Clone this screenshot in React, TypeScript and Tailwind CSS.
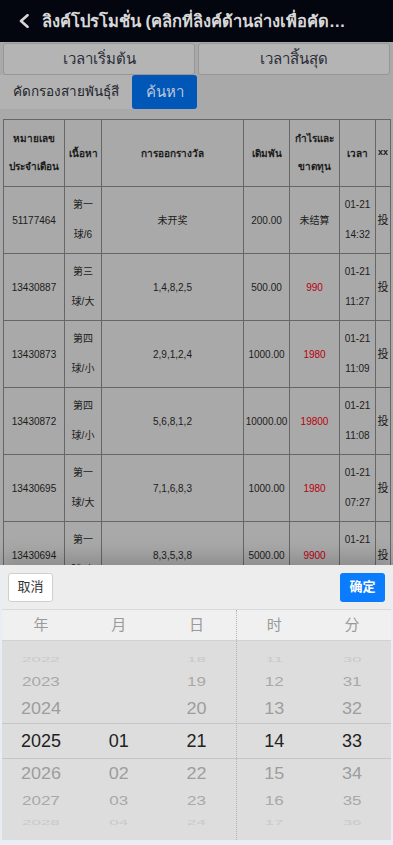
import React from "react";

type Row = {
  id: string;
  c1: string;
  c2: string;
  draw: string;
  bet: string;
  profit: string;
  red: boolean;
  d: string;
  t: string;
};

const rows: Row[] = [
  { id: "51177464", c1: "第一", c2: "球/6", draw: "未开奖", bet: "200.00", profit: "未结算", red: false, d: "01-21", t: "14:32" },
  { id: "13430887", c1: "第三", c2: "球/大", draw: "1,4,8,2,5", bet: "500.00", profit: "990", red: true, d: "01-21", t: "11:27" },
  { id: "13430873", c1: "第四", c2: "球/小", draw: "2,9,1,2,4", bet: "1000.00", profit: "1980", red: true, d: "01-21", t: "11:09" },
  { id: "13430872", c1: "第四", c2: "球/小", draw: "5,6,8,1,2", bet: "10000.00", profit: "19800", red: true, d: "01-21", t: "11:08" },
  { id: "13430695", c1: "第一", c2: "球/大", draw: "7,1,6,8,3", bet: "1000.00", profit: "1980", red: true, d: "01-21", t: "07:27" },
  { id: "13430694", c1: "第一", c2: "球/大", draw: "8,3,5,3,8", bet: "5000.00", profit: "9900", red: true, d: "01-21", t: "07:26" },
  { id: "13430690", c1: "第二", c2: "球/小", draw: "3,2,7,9,1", bet: "500.00", profit: "990", red: true, d: "01-21", t: "07:20" },
];

const slotStyles = [
  { h: "h-[20px]", cls: "text-[17px] text-[#c9c9c9] scale-y-[0.45]" },
  { h: "h-[24px]", cls: "text-[17px] text-[#a8a8a8] scale-y-[0.8]" },
  { h: "h-[30px]", cls: "text-[18px] text-[#9d9d9d] scale-y-[0.92]" },
  { h: "h-[35px]", cls: "text-[18px] text-[#222222]" },
  { h: "h-[30px]", cls: "text-[18px] text-[#9d9d9d] scale-y-[0.92]" },
  { h: "h-[24px]", cls: "text-[17px] text-[#a8a8a8] scale-y-[0.8]" },
  { h: "h-[20px]", cls: "text-[17px] text-[#c9c9c9] scale-y-[0.45]" },
];

const wheels: string[][] = [
  ["2022", "2023", "2024", "2025", "2026", "2027", "2028"],
  ["", "", "", "01", "02", "03", "04"],
  ["18", "19", "20", "21", "22", "23", "24"],
  ["11", "12", "13", "14", "15", "16", "17"],
  ["30", "31", "32", "33", "34", "35", "36"],
];

const labels = ["年", "月", "日", "时", "分"];

const font = {
  fontFamily:
    '"Liberation Sans", Tahoma, "Noto Sans", "Noto Sans CJK SC", sans-serif',
};

export default function App() {
  return (
    <div
      className="relative w-[393px] h-[845px] overflow-hidden bg-[#a9a9a9]"
      style={font}
    >
      {/* Header */}
      <div className="h-[42px] bg-[#03050f] flex items-center pl-[19px] pr-[44px]">
        <svg width="10" height="14" viewBox="0 0 10 14" className="shrink-0">
          <polyline
            points="8.5,1.2 2,7 8.5,12.8"
            fill="none"
            stroke="#d6d6d6"
            strokeWidth="2.6"
            strokeLinecap="round"
            strokeLinejoin="round"
          />
        </svg>
        <div className="ml-[13px] flex-1 min-w-0 truncate text-[16.5px] font-semibold text-[#d8d8d8] leading-[42px]">
          ลิงค์โปรโมชั่น (คลิกที่ลิงค์ด้านล่างเพื่อคัดลอก)
        </div>
      </div>

      {/* Time buttons */}
      <div className="mt-[1px] px-[3px] flex gap-[3px]">
        <div className="flex-1 h-[32px] rounded-[3px] border border-[#979797] bg-[#b4b4b4] flex items-center justify-center text-[15px] text-[#2a2c38]">
          เวลาเริ่มต้น
        </div>
        <div className="flex-1 h-[32px] rounded-[3px] border border-[#979797] bg-[#b4b4b4] flex items-center justify-center text-[15px] text-[#2a2c38]">
          เวลาสิ้นสุด
        </div>
      </div>

      {/* Filter row */}
      <div className="flex h-[34px]">
        <div className="w-[132px] bg-[#b2b2b2] flex items-center pl-[13px] text-[13.5px] whitespace-nowrap text-[#23252e]">
          คัดกรองสายพันธุ์สี
        </div>
        <div className="w-[65px] rounded-[3px] bg-[#0057b7] flex items-center justify-center text-[15px] text-[#bcc6da]">
          ค้นหา
        </div>
      </div>

      {/* Table */}
      <div className="mt-[10px] px-[3px]">
        <table className="w-[387px] table-fixed border-collapse text-[10px] text-[#1c1c1c]">
          <colgroup>
            <col className="w-[61px]" />
            <col className="w-[37px]" />
            <col className="w-[142px]" />
            <col className="w-[46px]" />
            <col className="w-[50px]" />
            <col className="w-[36px]" />
            <col className="w-[15px]" />
          </colgroup>
          <thead>
            <tr className="h-[67px]">
              <th className="border border-[#666] font-bold leading-[28px] text-center p-0">
                หมายเลข
                <br />
                ประจำเดือน
              </th>
              <th className="border border-[#666] font-bold text-center p-0">เนื้อหา</th>
              <th className="border border-[#666] font-bold text-center p-0">การออกรางวัล</th>
              <th className="border border-[#666] font-bold text-center p-0">เดิมพัน</th>
              <th className="border border-[#666] font-bold leading-[28px] text-center p-0">
                กำไรและ
                <br />
                ขาดทุน
              </th>
              <th className="border border-[#666] font-bold text-center p-0">เวลา</th>
              <th className="border border-[#666] font-bold text-center p-0 text-[9px]">xx</th>
            </tr>
          </thead>
          <tbody>
            {rows.map((r) => (
              <tr key={r.id} className="h-[67px]">
                <td className="border border-[#666] text-center p-0 whitespace-nowrap">{r.id}</td>
                <td className="border border-[#666] text-center p-0 leading-[30px] whitespace-nowrap">
                  {r.c1}
                  <br />
                  {r.c2}
                </td>
                <td className="border border-[#666] text-center p-0">{r.draw}</td>
                <td className="border border-[#666] text-center p-0 whitespace-nowrap">{r.bet}</td>
                <td
                  className={
                    r.red
                      ? "border border-[#666] text-center p-0 text-[#b8000c]"
                      : "border border-[#666] text-center p-0"
                  }
                >
                  {r.profit}
                </td>
                <td className="border border-[#666] text-center p-0 leading-[30px]">
                  {r.d}
                  <br />
                  {r.t}
                </td>
                <td className="border border-[#666] text-center p-0 text-[11px]">投</td>
              </tr>
            ))}
          </tbody>
        </table>
      </div>

      {/* Date picker sheet (overlay) */}
      <div className="absolute left-0 right-0 bottom-0 h-[280px] bg-[#e9eef4] px-[2px] pb-[5px] shadow-[0_-8px_18px_rgba(0,0,0,0.18)]">
        <div className="h-full flex flex-col bg-[#ededed]">
          <div className="h-[45px] flex items-center justify-between px-[6px] border-b border-[#d9d9d9]">
            <div className="w-[45px] h-[29px] rounded-[3px] border border-[#cfcfcf] bg-white flex items-center justify-center text-[13px] text-[#333]">
              取消
            </div>
            <div className="w-[45px] h-[29px] rounded-[3px] bg-[#0a7cfd] flex items-center justify-center text-[13px] font-semibold text-white">
              确定
            </div>
          </div>
          <div className="relative flex-1 flex flex-col">
            <div className="h-[31px] grid grid-cols-5 bg-[#f0f0f0] border-b border-[#d2d2d2]">
              {labels.map((l) => (
                <div
                  key={l}
                  className="flex items-center justify-center text-[15px] text-[#9a9a9a]"
                >
                  {l}
                </div>
              ))}
            </div>
            <div className="relative flex-1 grid grid-cols-5 bg-[#dddddd] pt-[8px]">
              {wheels.map((col, ci) => (
                <div key={ci} className="flex flex-col">
                  {col.map((v, i) => (
                    <div
                      key={i}
                      className={slotStyles[i].h + " flex items-center justify-center"}
                    >
                      <span className={"inline-block leading-none " + slotStyles[i].cls}>
                        {v}
                      </span>
                    </div>
                  ))}
                </div>
              ))}
              <div className="absolute left-0 right-0 top-[82px] h-[36px] border-y border-[#c6c6c6] pointer-events-none" />
            </div>
            <div className="absolute top-0 bottom-0 left-[233.5px] border-l border-dotted border-[#b5b5b5] pointer-events-none" />
          </div>
        </div>
      </div>
    </div>
  );
}
